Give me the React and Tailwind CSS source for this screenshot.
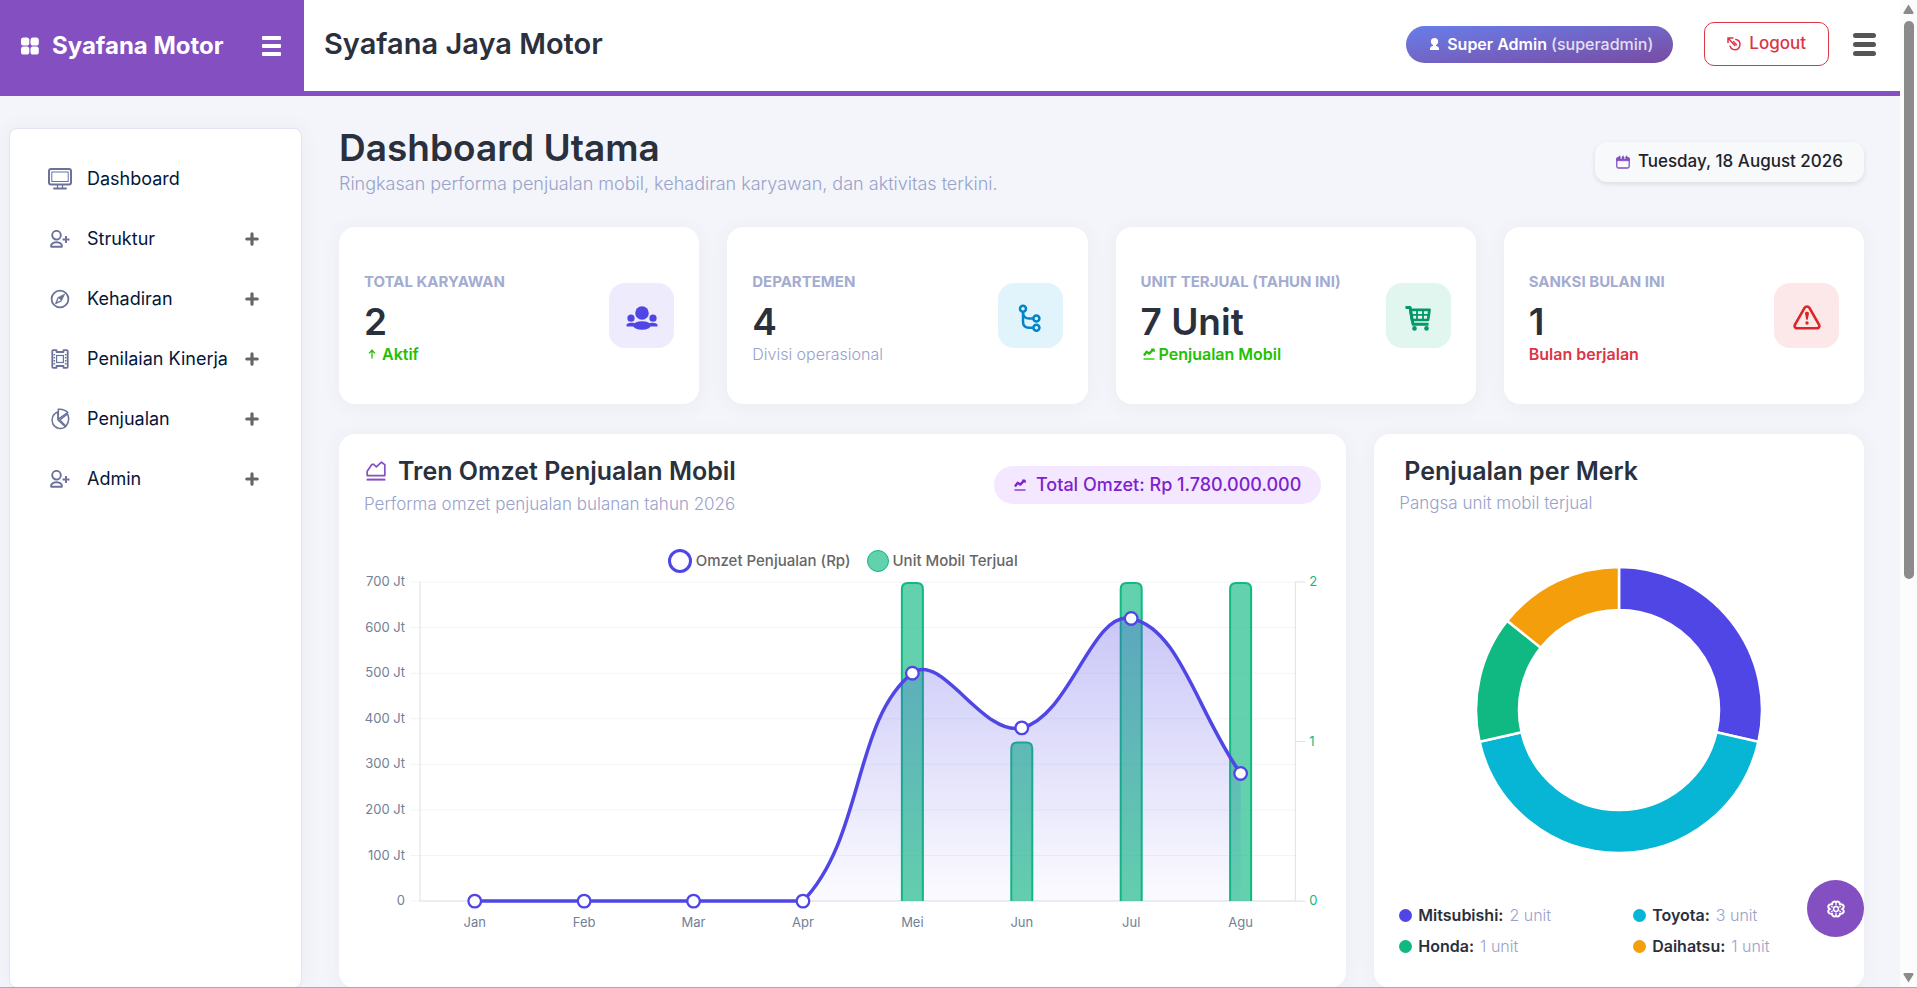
import React, { useState } from 'react';

/* ---------- icons ---------- */

const GridIcon = () => (
    <svg width="18" height="18" viewBox="0 0 18 18" fill="currentColor">
        <rect x="0" y="0.5" width="8.3" height="8" rx="2.6" />
        <rect x="9.5" y="0.5" width="8.3" height="8" rx="2.6" />
        <rect x="0" y="9.5" width="8.3" height="8" rx="2.6" />
        <rect x="9.5" y="9.5" width="8.3" height="8" rx="2.6" />
    </svg>
);

const MonitorIcon = () => (
    <svg width="24" height="22" viewBox="0 0 24 22" fill="none" stroke="currentColor">
        <rect x="1" y="1" width="22" height="15.5" rx="2" strokeWidth="2" />
        <rect x="3.8" y="4" width="16.4" height="9.5" strokeWidth="1" />
        <path d="M9.5 17v3M14.5 17v3" strokeWidth="1.3" />
        <path d="M6 20.5h12" strokeWidth="1.8" strokeLinecap="round" />
    </svg>
);

const UserAddIcon = () => (
    <svg width="20" height="18" viewBox="0 0 20 18" fill="none" stroke="currentColor" strokeWidth="1.9">
        <circle cx="6.5" cy="5.2" r="4.3" />
        <path d="M1.2 16.8c-.6-2.6 1.6-4.600 5.300-4.600s5.900 2 5.300 4.600z" strokeLinejoin="round" />
        <path d="M16 6v7M12.500 9.500h7" />
    </svg>
);

const CompassIcon = () => (
    <svg width="20" height="20" viewBox="0 0 20 20" fill="none" stroke="currentColor">
        <circle cx="10" cy="10" r="8.4" strokeWidth="1.8" />
        <path d="M14.6 5.2L11.6 11.4L8.2 8.4z" fill="currentColor" strokeWidth="0.8" />
        <path d="M8.2 8.4L5.8 14.4L11.6 11.6" strokeWidth="1.3" strokeLinejoin="round" />
    </svg>
);

const FilmIcon = () => (
    <svg width="18" height="20" viewBox="0 0 18 20" fill="none" stroke="currentColor">
        <path d="M5.500 1.200H2.200Q1.300 1.200 1.300 2.200V17.800Q1.300 18.800 2.200 18.800H5.500V17H12.500V18.800H15.800Q16.700 18.800 16.700 17.800V2.200Q16.700 1.200 15.800 1.200H12.500V3H5.500z" strokeWidth="1.800" strokeLinejoin="round" />
        <path d="M3.300 5v10.500M14.700 5v10.500" strokeWidth="1.600" strokeDasharray="1.500 1.500" />
        <rect x="5.600" y="6.500" width="6.800" height="7" strokeWidth="1.200" />
    </svg>
);

const PieIcon = () => (
    <svg width="20" height="22" viewBox="0 0 20 22" fill="none" stroke="currentColor" strokeWidth="1.500" strokeLinejoin="round">
        <path d="M8 4a8.400 8.400 0 1 0 7.400 14.800L8 12z" />
        <path d="M8.300 11.200V1.300c3.800-.4 7 .6 9.500 3.200z" />
        <path d="M17.500 5.800c1.900 4.200 1.500 8.600-1.600 12.400L9.800 12z" />
    </svg>
);

const PlusIcon = () => (
    <svg width="14" height="14" viewBox="0 0 14 14" fill="none" stroke="currentColor" strokeWidth="3.200" strokeLinecap="round">
        <path d="M7 1.800v10.400M1.800 7h10.400" />
    </svg>
);

const PersonIcon = () => (
    <svg width="9" height="12" viewBox="0 0 9 12" fill="currentColor">
        <ellipse cx="4.500" cy="3.600" rx="3.600" ry="3.600" />
        <path d="M3 6h3v2c1.800.3 3 1.300 3 2.600V12H0v-1.400C0 9.300 1.200 8.300 3 8z" />
    </svg>
);

const LogoutIcon = () => (
    <svg width="14" height="14" viewBox="0 0 14 14" fill="none" stroke="currentColor" strokeWidth="1.500">
        <path d="M1 6V1h5.500M1.300 1.300l6.900 7.600" />
        <path d="M8.200 2.200c3.200.6 5 3 4.700 5.600-.3 3-2.500 4.900-5.100 4.900-2.400 0-4.300-1.500-4.800-4" />
        <path d="M6.200 4.200l3.600 4" />
    </svg>
);

const CalendarIcon = () => (
    <svg width="14" height="14" viewBox="0 0 14 14" fill="none" stroke="currentColor">
        <rect x="0.800" y="2.600" width="12.400" height="10.400" rx="1.500" strokeWidth="1.300" />
        <path d="M0.800 3.200h12.400v2.500H0.800z" fill="currentColor" strokeWidth="0.800" />
        <path d="M3.500 0.800v3M7 0.800v3M10.500 0.800v3" strokeWidth="1.600" />
        <path d="M5.200 1.500v2.500M8.800 1.500v2.500" stroke="white" strokeWidth="0.900" />
    </svg>
);

const ArrowUpIcon = () => (
    <svg width="8" height="10" viewBox="0 0 8 10" fill="none" stroke="currentColor" strokeWidth="1.300">
        <path d="M4 9.500V1.500M1 4.400L4 1.200l3 3.200" />
    </svg>
);

const LineGraphIcon = () => (
    <svg width="12" height="12" viewBox="0 0 12 12" fill="none" stroke="currentColor">
        <path d="M1 7.500L3.600 3.800L6.200 5.600L10 1.600" strokeWidth="2.300" strokeLinejoin="round" />
        <path d="M8.200 1h3v3" strokeWidth="1" fill="currentColor" />
        <path d="M0.500 11h11" strokeWidth="1.300" />
    </svg>
);

const AreaGraphIcon = () => (
    <svg width="20" height="20" viewBox="0 0 20 20" fill="none" stroke="currentColor" strokeWidth="1.700" strokeLinejoin="round">
        <path d="M1.200 14.600V10.200L5.800 3.600L7.400 3.200L10.400 5.800L15.400 1.200L18.800 3.600V14.600z" />
        <path d="M0.600 18.600h18.800" strokeWidth="2" />
    </svg>
);

const UsersIcon = () => (
    <svg width="32" height="24" viewBox="0 0 32 24" fill="currentColor">
        <circle cx="16" cy="7" r="6.800" />
        <circle cx="5" cy="12.200" r="3.600" />
        <circle cx="27" cy="12.200" r="3.600" />
        <ellipse cx="16" cy="19.500" rx="9" ry="4.200" />
        <path d="M0.400 19.400c0-1.800 2-2.700 4.800-2.700 2 0 3.400.5 4.400 1.100L7.600 20.500H1.600c-.8 0-1.200-.4-1.200-1.100zM31.600 19.400c0-1.800-2-2.700-4.800-2.700-2 0-3.400.5-4.400 1.100l2 2.700h6c.8 0 1.200-.4 1.200-1.100z" />
    </svg>
);

const BranchIcon = () => (
    <svg width="24" height="28" viewBox="0 0 24 28" fill="none" stroke="currentColor" strokeWidth="2.500">
        <circle cx="5" cy="4.800" r="3" />
        <circle cx="18.400" cy="14.600" r="3" />
        <circle cx="18.400" cy="23.800" r="3" />
        <path d="M5 8v9.500c0 4.200 2 6.300 6 6.300h4.400M5 8.500c.4 4 2.400 6.100 6 6.100h4.400" />
    </svg>
);

const CartIcon = () => (
    <svg width="26" height="26" viewBox="0 0 26 26" fill="none" stroke="currentColor">
        <path d="M0.500 2.500h4.600L8 19.200h15.500" strokeWidth="3" strokeLinejoin="round" />
        <path d="M5.300 4.800h19.200l-1.500 10.200H7z" strokeWidth="2.700" strokeLinejoin="round" />
        <path d="M6.500 9.800h17.300M12 5v10M18 5v10" strokeWidth="1.800" />
        <circle cx="9.500" cy="23.400" r="2.300" fill="currentColor" stroke="none" />
        <circle cx="21.500" cy="23.400" r="2.300" fill="currentColor" stroke="none" />
    </svg>
);

const WarningIcon = () => (
    <svg width="28" height="25" viewBox="0 0 28 25" fill="none" stroke="currentColor">
        <path d="M11.700 2.700c1-1.700 3.500-1.700 4.600 0l9.700 17c1 1.700 0 3.600-2 3.600H4c-2 0-3-1.900-2-3.600z" strokeWidth="2.600" strokeLinejoin="round" />
        <path d="M12 8.500c0-1.100.8-1.700 2-1.700s2 .6 2 1.700l-1.300 6.300h-1.400z" fill="currentColor" stroke="none" />
        <circle cx="14" cy="18" r="1.700" fill="currentColor" stroke="none" />
    </svg>
);

const FlowerIcon = () => (
    <svg width="18" height="18" viewBox="0 0 18 18" fill="none" stroke="currentColor" strokeWidth="2">
        <path d="M5.600 2.600C7 .6 8.600 1.600 9 2.400c.4-.8 2-1.800 3.400.2.700 1 .6 1.600.6 1.600s3-.2 3.600 1.600c.6 1.700-.6 2.700-1.400 3.200.8.500 2 1.500 1.400 3.200-.6 1.800-3.600 1.600-3.600 1.600s.1.600-.6 1.600c-1.400 2-3 1-3.400.2-.4.800-2 1.800-3.400-.2-.7-1-.6-1.600-.6-1.600s-3 .2-3.600-1.600C.8 10.500 2 9.500 2.800 9 2 8.500.8 7.500 1.400 5.800 2 4 5 4.200 5 4.200s-.1-.6.600-1.600z" />
        <circle cx="9" cy="9" r="2.400" strokeWidth="1.500" />
        <path d="M9 3.500v2M9 12.500v2M4 6.300l2 1M12 10.700l2 1M14 6.300l-2 1M6 10.700l-2 1" strokeWidth="1.200" />
    </svg>
);

/* ---------- data ---------- */

const menu = [
    { name: 'Dashboard', icon: <MonitorIcon /> },
    { name: 'Struktur', icon: <UserAddIcon />, sub: true },
    { name: 'Kehadiran', icon: <CompassIcon />, sub: true },
    { name: 'Penilaian Kinerja', icon: <FilmIcon />, sub: true },
    { name: 'Penjualan', icon: <PieIcon />, sub: true },
    { name: 'Admin', icon: <UserAddIcon />, sub: true },
];

const stats = [
    { label: 'TOTAL KARYAWAN', value: '2', note: 'Aktif', noteIcon: <ArrowUpIcon />, noteClass: 'font-semibold text-[#22c003] gap-1.5 pl-1', icon: <UsersIcon />, iconClass: 'bg-[#edebfc] text-[#4f46e5]' },
    { label: 'DEPARTEMEN', value: '4', note: 'Divisi operasional', noteClass: 'font-light text-[#98a2ca]', icon: <BranchIcon />, iconClass: 'bg-[#e1f4fc] text-[#0284c7]' },
    { label: 'UNIT TERJUAL (TAHUN INI)', value: '7 Unit', note: 'Penjualan Mobil', noteIcon: <LineGraphIcon />, noteClass: 'font-semibold text-[#22c003] gap-1 pl-0.5', icon: <CartIcon />, iconClass: 'bg-[#e1f6ef] text-[#059669]' },
    { label: 'SANKSI BULAN INI', value: '1', note: 'Bulan berjalan', noteClass: 'font-semibold text-[#dc3545]', icon: <WarningIcon />, iconClass: 'bg-[#fce8e8] text-[#dc2626]' },
];

const months = [
    { name: 'Jan', omzet: 0, unit: 0 },
    { name: 'Feb', omzet: 0, unit: 0 },
    { name: 'Mar', omzet: 0, unit: 0 },
    { name: 'Apr', omzet: 0, unit: 0 },
    { name: 'Mei', omzet: 500, unit: 2 },
    { name: 'Jun', omzet: 380, unit: 1 },
    { name: 'Jul', omzet: 620, unit: 2 },
    { name: 'Agu', omzet: 280, unit: 2 },
];

const brands = [
    { name: 'Mitsubishi', unit: 2, color: '#4f46e5' },
    { name: 'Toyota', unit: 3, color: '#06b6d4' },
    { name: 'Honda', unit: 1, color: '#10b981' },
    { name: 'Daihatsu', unit: 1, color: '#f59e0b' },
];

/* ---------- charts ---------- */

const LEFT = 56;
const RIGHT = 931;
const TOP = 9;
const BOTTOM = 328;
const STEP = (RIGHT - LEFT) / months.length;

const yOmzet = (v) => BOTTOM - (v / 700) * (BOTTOM - TOP);
const yUnit = (v) => BOTTOM - (v / 2) * (BOTTOM - TOP);

// smooth line through the points, control points kept inside the plot
const curve = (pts, tension) => {
    const clamp = (y) => Math.min(BOTTOM, Math.max(TOP, y));
    const cps = pts.map((p, i) => {
        const a = pts[i - 1] || p;
        const b = pts[i + 1] || p;
        const d1 = Math.hypot(p.x - a.x, p.y - a.y);
        const d2 = Math.hypot(b.x - p.x, b.y - p.y);
        const fa = (tension * d1) / (d1 + d2);
        const fb = (tension * d2) / (d1 + d2);
        return {
            px: p.x - fa * (b.x - a.x), py: clamp(p.y - fa * (b.y - a.y)),
            nx: p.x + fb * (b.x - a.x), ny: clamp(p.y + fb * (b.y - a.y)),
        };
    });
    let d = `M${pts[0].x} ${pts[0].y}`;
    for (let i = 1; i < pts.length; i++) {
        d += ` C${cps[i - 1].nx} ${cps[i - 1].ny} ${cps[i].px} ${cps[i].py} ${pts[i].x} ${pts[i].y}`;
    }
    return d;
};

const SalesChart = () => {
    const pts = months.map((m, i) => ({ x: LEFT + STEP * (i + 0.5), y: yOmzet(m.omzet) }));
    const line = curve(pts, 0.4);
    const area = `${line} L${pts[pts.length - 1].x} ${BOTTOM} L${pts[0].x} ${BOTTOM} Z`;

    return (
        <svg className="block w-full" viewBox="0 0 957 365" role="img" aria-label="Tren omzet penjualan mobil">
            <defs>
                <linearGradient id="omzet" gradientUnits="userSpaceOnUse" x1="0" y1={TOP} x2="0" y2={BOTTOM}>
                    <stop offset="0" stopColor="#4f46e5" stopOpacity="0.34" />
                    <stop offset="1" stopColor="#4f46e5" stopOpacity="0.02" />
                </linearGradient>
            </defs>

            {[0, 100, 200, 300, 400, 500, 600, 700].map((v) => (
                <g key={v}>
                    <line x1={LEFT - 10} x2={RIGHT} y1={yOmzet(v)} y2={yOmzet(v)} stroke="#f1f4f9" />
                    <text x="41" y={yOmzet(v) + 4} textAnchor="end" fontSize="13" fill="#718096">{v === 0 ? '0' : `${v} Jt`}</text>
                </g>
            ))}
            <path d={`M${LEFT} ${TOP}V${BOTTOM}H${RIGHT}V${TOP}`} fill="none" stroke="#dfe1e5" />
            {[0, 1, 2].map((v) => (
                <g key={v}>
                    <line x1={RIGHT} x2={RIGHT + 10} y1={yUnit(v)} y2={yUnit(v)} stroke="#dfe1e5" />
                    <text x="945" y={yUnit(v) + 4} fontSize="13" fill="#10b981">{v}</text>
                </g>
            ))}

            {months.map((m, i) => {
                const x = pts[i].x;
                const y = yUnit(m.unit) + 1;
                return (
                    <g key={m.name}>
                        {m.unit > 0 && (
                            <path
                                d={`M${x - 10.5} ${BOTTOM}V${y + 6}q0 -6 6 -6h9q6 0 6 6V${BOTTOM}`}
                                fill="#10b981"
                                fillOpacity="0.65"
                                stroke="#10b981"
                                strokeWidth="2"
                            />
                        )}
                        <text x={x} y="354" textAnchor="middle" fontSize="13" fill="#718096">{m.name}</text>
                    </g>
                );
            })}

            <path d={area} fill="url(#omzet)" />
            <path d={line} fill="none" stroke="#4f46e5" strokeWidth="3.500" />
            {pts.map((p) => (
                <circle key={p.x} cx={p.x} cy={p.y} r="6.300" fill="white" stroke="#4f46e5" strokeWidth="2.300" />
            ))}
        </svg>
    );
};

const BrandChart = () => {
    const total = brands.reduce((sum, b) => sum + b.unit, 0);
    const point = (r, part) => {
        const angle = (part / total) * Math.PI * 2 - Math.PI / 2;
        return `${142 + r * Math.cos(angle)} ${142 + r * Math.sin(angle)}`;
    };
    let from = 0;

    return (
        <svg className="mx-auto block w-[284px]" viewBox="0 0 284 284" role="img" aria-label="Penjualan per merk">
            {brands.map((b) => {
                const start = from;
                from += b.unit;
                return (
                    <path
                        key={b.name}
                        d={`M${point(143, start)}A143 143 0 0 1 ${point(143, from)}L${point(100, from)}A100 100 0 0 0 ${point(100, start)}Z`}
                        fill={b.color}
                        stroke="white"
                        strokeWidth="2.500"
                    />
                );
            })}
        </svg>
    );
};

/* ---------- page parts ---------- */

const Sidebar = () => (
    <aside className="w-[304px] shrink-0 pt-8 pl-[9px] pr-[2px]">
        <nav className="h-full rounded-lg border border-[#e4e3f4] bg-white pt-5 pl-[38px] pr-[42px] shadow-[0_0_20px_rgba(80,80,160,0.06)]">
            <ul>
                {menu.map((item) => (
                    <li key={item.name}>
                        <a href="#" className="flex h-[60px] items-center text-lg text-[#04163a]">
                            <span className="mr-[15px] flex w-6 shrink-0 justify-center text-[#6b7299]">{item.icon}</span>
                            <span className="flex-1 whitespace-nowrap">{item.name}</span>
                            {item.sub && <span className="text-[#666]"><PlusIcon /></span>}
                        </a>
                    </li>
                ))}
            </ul>
        </nav>
    </aside>
);

const Header = ({ onToggle }) => (
    <header className="flex h-24 shrink-0">
        <div className="flex w-[304px] shrink-0 items-center bg-[#844fc1] pb-1 pl-[21px] pr-[23px] text-white">
            <GridIcon />
            <span className="ml-[13px] flex-1 text-2xl font-bold">Syafana Motor</span>
            <button type="button" aria-label="Menu" onClick={onToggle} className="flex w-[19px] flex-col gap-[4px]">
                <span className="h-1 rounded-[1px] bg-white" />
                <span className="h-1 rounded-[1px] bg-white" />
                <span className="h-1 rounded-[1px] bg-white" />
            </button>
        </div>
        <div className="flex flex-1 items-center border-b-[5px] border-[#844fc1] bg-white pb-[3px] pl-5 pr-6">
            <h2 className="flex-1 text-[29px] font-semibold text-[#2a303c]">Syafana Jaya Motor</h2>
            <div className="flex h-[37px] items-center rounded-full bg-gradient-to-br from-[#667eea] to-[#764ba2] px-5 font-semibold text-white">
                <span className="mr-2 ml-1"><PersonIcon /></span>
                Super Admin&nbsp;<span className="font-medium opacity-80">(superadmin)</span>
            </div>
            <button type="button" className="ml-[31px] flex h-11 items-center gap-2 rounded-[10px] border border-[#dc3545] px-[22px] text-[17px] font-medium text-[#dc3545]">
                <LogoutIcon />
                Logout
            </button>
            <button type="button" aria-label="Opsi" className="ml-6 flex w-[23px] flex-col gap-[4px]">
                <span className="h-[5px] rounded-full bg-[#555]" />
                <span className="h-[5px] rounded-full bg-[#555]" />
                <span className="h-[5px] rounded-full bg-[#555]" />
            </button>
        </div>
    </header>
);

const StatCard = ({ stat }) => (
    <div className="flex items-start justify-between rounded-2xl bg-white px-[25px] pt-[43px] pb-[38px] shadow-[0_2px_20px_rgba(80,80,120,0.06)]">
        <div className="whitespace-nowrap">
            <p className="mb-2 text-[15px] leading-6 font-bold text-[#a3acd0]">{stat.label}</p>
            <p className="text-[37px] leading-10 font-semibold text-[#2a303c]">{stat.value}</p>
            <p className={`flex items-center text-base leading-6 ${stat.noteClass}`}>
                {stat.noteIcon}
                {stat.note}
            </p>
        </div>
        <div className={`mt-[13px] flex h-[65px] w-[65px] shrink-0 items-center justify-center rounded-2xl pt-1 ${stat.iconClass}`}>{stat.icon}</div>
    </div>
);

const Scrollbar = () => (
    <div className="flex w-[17px] shrink-0 flex-col items-center bg-[#fcfcfc] pt-1 pb-[5px] text-[#8b8b8b]">
        <svg width="11" height="11" viewBox="0 0 11 11" fill="currentColor"><path d="M5.500 0.500L10.500 8.500Q10.800 10 9.500 10H1.500Q0.200 10 0.500 8.500z" /></svg>
        <div className="mt-[6px] h-[57%] w-[10px] rounded-full bg-[#8b8b8b]" />
        <svg className="mt-auto" width="11" height="11" viewBox="0 0 11 11" fill="currentColor"><path d="M5.500 10.500L10.500 2.500Q10.800 1 9.500 1H1.500Q0.200 1 0.500 2.500z" /></svg>
    </div>
);

const App = () => {
    const [sidebarOpen, setSidebarOpen] = useState(true);

    return (
        <div className="relative flex h-screen overflow-hidden bg-[#f3f5fa] font-['Inter',sans-serif]">
            <div className="flex min-w-0 flex-1 flex-col">
                <Header onToggle={() => setSidebarOpen(!sidebarOpen)} />
                <div className="flex min-h-0 flex-1">
                    {sidebarOpen && <Sidebar />}

                    <main className="min-w-0 flex-1 pt-[30px] pl-[35px] pr-9">
                        <div className="mb-[29px] flex items-center justify-between">
                            <div>
                                <h1 className="text-[37px] leading-[44px] font-semibold text-[#2a303c]">Dashboard Utama</h1>
                                <p className="text-lg leading-7 font-light text-[#98a2ca]">Ringkasan performa penjualan mobil, kehadiran karyawan, dan aktivitas terkini.</p>
                            </div>
                            <div className="flex h-10 items-center gap-2 rounded-xl bg-[#f8f9fb] px-[21px] text-[17px] font-medium text-[#1f2329] shadow-[0_2px_5px_rgba(0,0,0,0.1)]">
                                <span className="text-[#844fc1]"><CalendarIcon /></span>
                                Tuesday, 18 August 2026
                            </div>
                        </div>

                        <div className="mb-[30px] grid grid-cols-4 gap-7">
                            {stats.map((stat) => <StatCard key={stat.label} stat={stat} />)}
                        </div>

                        <div className="grid grid-cols-3 gap-7">
                            <section className="col-span-2 rounded-2xl bg-white px-[25px] pt-5 pb-[50px] shadow-[0_2px_20px_rgba(80,80,120,0.06)]">
                                <div className="mb-[33px] flex items-center justify-between">
                                    <div>
                                        <h3 className="mb-1 flex items-center gap-3 pl-[2px] text-[25px] leading-[34px] font-semibold text-[#2a303c]">
                                            <span className="text-[#844fc1]"><AreaGraphIcon /></span>
                                            Tren Omzet Penjualan Mobil
                                        </h3>
                                        <p className="text-[17px] leading-6 font-light text-[#98a2ca]">Performa omzet penjualan bulanan tahun 2026</p>
                                    </div>
                                    <div className="flex h-[38px] items-center gap-[10px] rounded-full bg-[#f3e8ff] px-5 text-lg font-medium text-[#7e22ce]">
                                        <LineGraphIcon />
                                        Total Omzet: Rp 1.780.000.000
                                    </div>
                                </div>
                                <div className="flex h-6 items-center justify-center text-[15px] font-medium text-[#666]">
                                    <span className="mr-1 h-6 w-6 rounded-full border-[3px] border-[#4f46e5] bg-white" />
                                    Omzet Penjualan (Rp)
                                    <span className="mr-1 ml-4 h-[22px] w-[22px] rounded-full border border-[#10b981] bg-[#10b981]/65" />
                                    Unit Mobil Terjual
                                </div>
                                <SalesChart />
                            </section>

                            <section className="rounded-2xl bg-white px-[25px] pt-5 shadow-[0_2px_20px_rgba(80,80,120,0.06)]">
                                <h3 className="mb-[3px] pl-[5px] text-[25px] leading-[34px] font-semibold text-[#2a303c]">Penjualan per Merk</h3>
                                <p className="mb-[53px] text-[17px] leading-6 font-light text-[#98a2ca]">Pangsa unit mobil terjual</p>
                                <BrandChart />
                                <ul className="mt-[51px] grid grid-cols-2 gap-x-7 gap-y-[7px]">
                                    {brands.map((b) => (
                                        <li key={b.name} className="flex items-center text-base leading-6 text-[#98a2ca]">
                                            <span className="mr-1.5 h-[13px] w-[13px] rounded-full" style={{ background: b.color }} />
                                            <span className="mr-1.5 font-semibold text-[#2a303c]">{b.name}:</span>
                                            <span className="font-light">{b.unit} unit</span>
                                        </li>
                                    ))}
                                </ul>
                            </section>
                        </div>
                    </main>
                </div>
            </div>

            <Scrollbar />

            <button type="button" aria-label="Pengaturan" className="absolute right-[53px] bottom-[51px] flex h-[57px] w-[57px] items-center justify-center rounded-full bg-[#844fc1] text-white">
                <FlowerIcon />
            </button>
            <div className="absolute inset-x-0 bottom-0 h-px bg-[#aaabae]" />
        </div>
    );
};

export default App;
